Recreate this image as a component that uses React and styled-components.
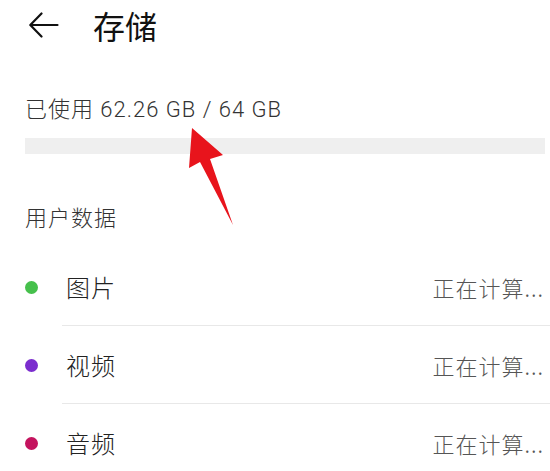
import styled, { createGlobalStyle } from "styled-components";

const GlobalStyle = createGlobalStyle`
    body {
        margin: 0;
        background: #ffffff;
        font-family: "Roboto", "Noto Sans CJK SC", sans-serif;
    }
`;

const items = [
    { name: "图片", color: "#46c04c" },
    { name: "视频", color: "#7b2dce" },
    { name: "音频", color: "#c4135e" },
];

export default function App(){
    return (
        <>
            <GlobalStyle />
            <Page>
                <Header>
                    <BackIcon viewBox="0 0 30 26">
                        <path d="M29 13H2M13 1.5L1.8 13L13 24.5" fill="none" stroke="#111" strokeWidth="2.2" strokeLinecap="round" strokeLinejoin="round" />
                    </BackIcon>
                    <Title>存储</Title>
                </Header>
                <Usage>已使用 62.26 GB / 64 GB</Usage>
                <Bar />
                <SectionLabel>用户数据</SectionLabel>
                <List>
                    {items.map((item) => (
                        <Row key={item.name}>
                            <DotCell>
                                <Dot color={item.color} />
                            </DotCell>
                            <RowBody>
                                <RowName>{item.name}</RowName>
                                <RowStatus>正在计算...</RowStatus>
                            </RowBody>
                        </Row>
                    ))}
                </List>
                <Pointer viewBox="0 0 550 471">
                    <polygon points="192,128 223,155 210,159 233,225 200,162 189,168" fill="#e8141c" />
                </Pointer>
            </Page>
        </>
    )
}

const Page = styled.div`
    position: relative;
    width: 550px;
    height: 471px;
    overflow: hidden;
`;

const Header = styled.div`
    display: flex;
    align-items: center;
    height: 50px;
    padding-left: 28px;
    gap: 34px;
`;

const BackIcon = styled.svg`
    width: 31px;
    height: 26px;
`;

const Title = styled.div`
    font-family: "Noto Sans CJK SC", sans-serif;
    font-size: 32px;
    line-height: 40px;
    color: #111;
    font-weight: 400;
`;

const Usage = styled.div`
    margin: 48px 0 0 25px;
    font-size: 22px;
    line-height: 24px;
    font-weight: 300;
    letter-spacing: 1px;
    color: #333;
`;

const Bar = styled.div`
    margin: 16px 5px 0 25px;
    height: 16px;
    background: #efefef;
`;

const SectionLabel = styled.div`
    margin: 50px 0 20px 25px;
    font-family: "Noto Sans CJK SC", sans-serif;
    font-size: 22px;
    line-height: 24px;
    font-weight: 300;
    letter-spacing: 1px;
    color: #333;
`;

const List = styled.div`
    display: flex;
    flex-direction: column;
`;

const Row = styled.div`
    display: flex;
    align-items: stretch;
`;

const DotCell = styled.div`
    width: 62px;
    padding-left: 25px;
    box-sizing: border-box;
    display: flex;
    align-items: center;
`;

const Dot = styled.span`
    width: 13px;
    height: 13px;
    border-radius: 50%;
    background: ${(props) => props.color};
`;

const RowBody = styled.div`
    flex: 1;
    height: 77px;
    display: flex;
    align-items: center;
    justify-content: space-between;
    padding-right: 6px;
    border-bottom: 1.5px solid #e8e8e8;
`;

const RowName = styled.span`
    margin-left: 4px;
    font-family: "Noto Sans CJK SC", sans-serif;
    font-size: 24px;
    font-weight: 300;
    letter-spacing: 1px;
    color: #222;
`;

const RowStatus = styled.span`
    font-family: "Noto Sans CJK SC", sans-serif;
    font-size: 22px;
    font-weight: 300;
    letter-spacing: 1px;
    color: #555;
`;

const Pointer = styled.svg`
    position: absolute;
    left: 0;
    top: 0;
    width: 550px;
    height: 471px;
    pointer-events: none;
`;
